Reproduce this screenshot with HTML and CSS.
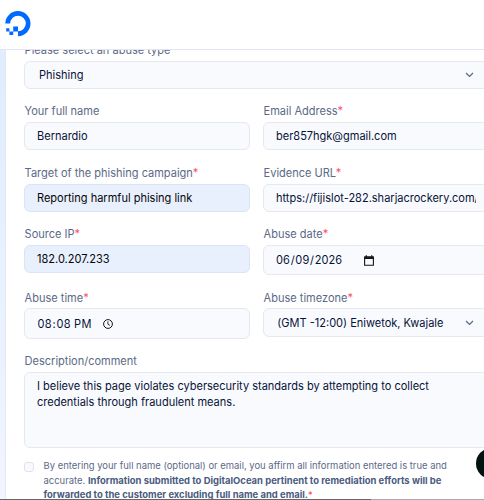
FILE: index.html
```html
<!DOCTYPE html>
<html lang="en">
<head>
<meta charset="utf-8">
<title>Abuse report</title>
<link rel="stylesheet" href="styles.css">
</head>
<body>
<header class="topbar">
  <svg class="logo" width="26" height="26" viewBox="0 0 26 26" fill="#0069ff">
    <path d="M13 25.2v-4.9a7.8 7.8 0 1 0-7.8-7.8H.3A12.6 12.6 0 1 1 13 25.2Z"/>
    <path d="M8.2 15.6H13v4.8H8.2zM4.4 20.4h3.8v3.7H4.4zM1.2 17.2h3.2v3.2H1.2z"/>
  </svg>
</header>
<main class="page">
  <form class="card">
    <div class="field wide type">
      <div class="label">Please select an abuse type</div>
      <div class="control select"><span class="value">Phishing</span>
        <svg class="chevron" width="9" height="6" viewBox="0 0 9 6"><path d="M1 1l3.5 3.4L8 1"/></svg></div>
    </div>
    <div class="field name">
      <div class="label">Your full name</div>
      <div class="control"><span class="value">Bernardio</span></div>
    </div>
    <div class="field name">
      <div class="label">Email Address<b class="req">*</b></div>
      <div class="control"><span class="value">ber857hgk@gmail.com</span></div>
    </div>
    <div class="field target">
      <div class="label">Target of the phishing campaign<b class="req">*</b></div>
      <div class="control filled"><span class="value">Reporting harmful phising link</span></div>
    </div>
    <div class="field target">
      <div class="label">Evidence URL<b class="req">*</b></div>
      <div class="control"><span class="value url">https://fijislot-282.sharjacrockery.com/</span></div>
    </div>
    <div class="field source">
      <div class="label">Source IP<b class="req">*</b></div>
      <div class="control filled"><span class="value">182.0.207.233</span></div>
    </div>
    <div class="field source">
      <div class="label">Abuse date<b class="req">*</b></div>
      <div class="control date"><span class="value digits">06<i>/</i>09<i>/</i>2026</span>
        <svg class="calendar" width="10" height="11" viewBox="0 0 10 11"><path d="M.6 2h8.8v8.3H.6z" fill="none" stroke="#151515" stroke-width="1.1"/><path d="M.5 1.5h9v2.4h-9zM1.7.2h1.2v2H1.7zM7.1.2h1.2v2H7.1z" fill="#151515"/></svg></div>
    </div>
    <div class="field time">
      <div class="label">Abuse time<b class="req">*</b></div>
      <div class="control clocked"><span class="value digits">08<i>:</i>08 PM</span>
        <svg class="clock" width="10" height="10" viewBox="0 0 10 10" fill="none" stroke="#151515"><circle cx="5" cy="5" r="4.4"/><path d="M4.9 2.3v2.9l2 1.2" stroke-width=".9"/></svg></div>
    </div>
    <div class="field time">
      <div class="label">Abuse timezone<b class="req">*</b></div>
      <div class="control select"><span class="value zone">(GMT -12:00) Eniwetok, Kwajale</span>
        <svg class="chevron" width="9" height="6" viewBox="0 0 9 6"><path d="M1 1l3.5 3.4L8 1"/></svg></div>
    </div>
    <div class="field wide description">
      <div class="label">Description/comment</div>
      <div class="control area"><span class="value">I believe this page violates cybersecurity standards by attempting to collect<br>credentials through fraudulent means.</span></div>
    </div>
    <div class="consent wide">
      <span class="checkbox"></span>
      <p class="terms">By entering your full name (optional) or email, you affirm all information entered is true and<br>accurate. <strong>Information submitted to DigitalOcean pertinent to remediation efforts will be<br>forwarded to the customer excluding full name and email.</strong><b class="req">*</b></p>
    </div>
  </form>
</main>
<div class="help"></div>
<div class="edge"></div>
</body>
</html>
```
FILE: styles.css
```css
* { box-sizing: border-box; }
body {
  margin: 0;
  height: 500px;
  overflow: hidden;
  position: relative;
  font-family: Inter, "Liberation Sans", sans-serif;
  font-size: 11.02px;
  color: #061338;
  background: #fff;
}
.topbar {
  position: relative;
  z-index: 2;
  height: 50px;
  padding: 11px 0 0 5px;
  background: #fff;
  border-bottom: 1px solid #e3e6ec;
}
.logo { display: block; }
.page {
  height: 450px;
  padding-left: 5px;
  overflow: hidden;
  background: linear-gradient(#deedff, #f1f5ff);
}
.card {
  width: 503px;
  height: 470px;
  margin-top: -7px;
  padding: 0 19px 0 18px;
  display: grid;
  grid-template-columns: 226px 226px;
  column-gap: 13px;
  grid-template-rows: 46px 62px 61px 63px 64px 109px 60px;
  align-content: start;
  border-left: 1px solid #e3e8f2;
  background: #fff;
}
.wide { grid-column: 1 / -1; }
.label {
  height: 18px;
  padding-left: .6px;
  line-height: 14px;
  color: #5b6987;
  white-space: nowrap;
}
.field { min-width: 0; }
.name, .target, .source, .time, .description { padding-top: 15px; }
.time .label { position: relative; top: .5px; }
.req { font-weight: 400; color: #ff4d6a; }
.control {
  height: 28px;
  padding: 0 12px;
  display: flex;
  align-items: center;
  border: 1px solid #e5e8ef;
  border-radius: 6px;
  background: #f9fafe;
  white-space: nowrap;
}
.filled { background: #e8f0fe; border-color: #dde4f1; color: #050505; }
.value { line-height: 16px; }
.url { width: 201px; overflow: hidden; }
.select { padding-left: 14px; }
.chevron { margin-left: auto; fill: none; stroke: #5b6987; stroke-width: 1.3; }
.time .chevron, .type .chevron { margin-right: 2px; }
.time .select { height: 29px; padding-left: 13.3px; }
.date { height: 30px; }
.clocked { height: 31px; padding-left: 12.6px; }
.digits { letter-spacing: .12px; }
.digits i { font-style: normal; padding: 0 .6px; }
.clocked .digits { letter-spacing: .25px; }
.calendar { margin-left: 21.5px; }
.clock { margin-left: 11px; }
.area { height: 76px; align-items: flex-start; padding-top: 5px; }
.consent { display: flex; }
.checkbox {
  width: 10px;
  height: 10px;
  margin-top: 14px;
  border: 1px solid #dfe3ee;
  border-radius: 3px;
  background: #f9fafe;
}
.terms {
  margin: 11px 0 0 9.5px;
  font-size: 9.45px;
  line-height: 14.5px;
  color: #5b6987;
  white-space: nowrap;
}
.terms strong { font-weight: 700; color: #4a5b80; }
.help {
  position: absolute;
  z-index: 3;
  left: 476px;
  top: 448px;
  width: 31px;
  height: 31px;
  border-radius: 50%;
  background: #031314;
}
.edge {
  position: absolute;
  z-index: 4;
  left: 0;
  top: 499px;
  width: 484px;
  height: 1px;
  background: linear-gradient(90deg, #666 371px, #aaa 371px);
}
```
